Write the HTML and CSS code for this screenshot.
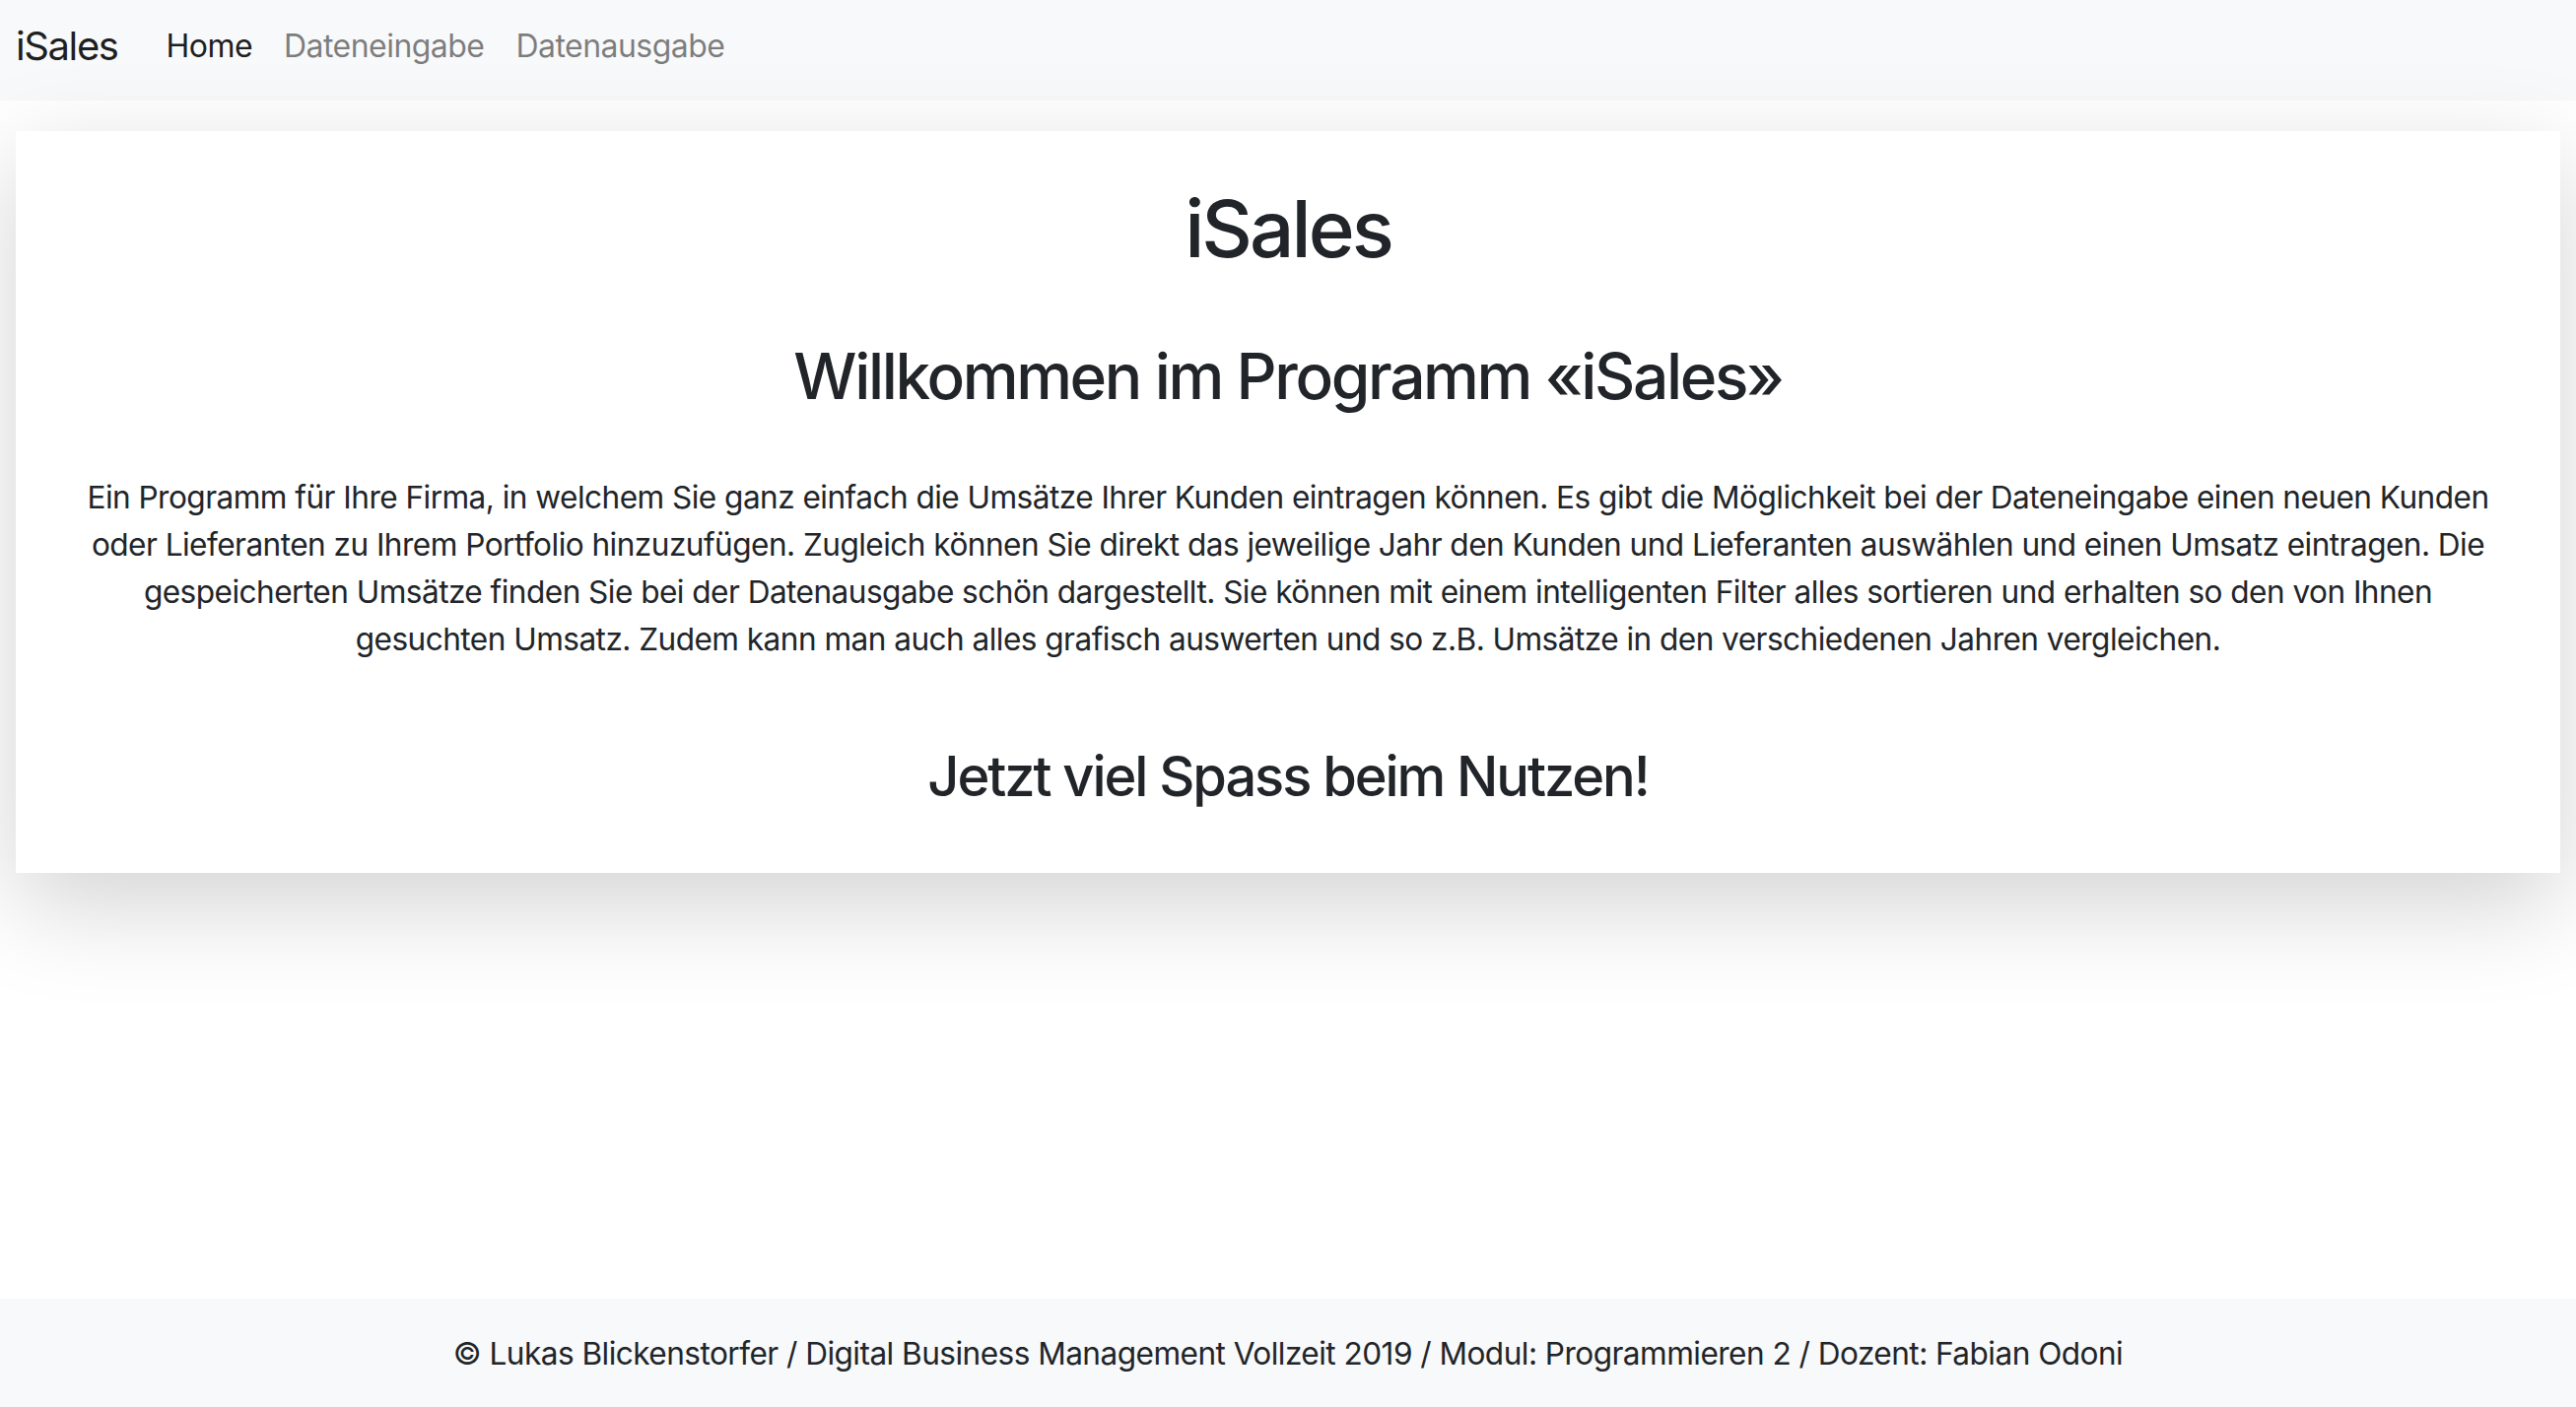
FILE: index.html
```html
<!DOCTYPE html>
<html lang="de">
<head>
<meta charset="utf-8">
<title>iSales</title>
<link rel="stylesheet" href="styles.css">
</head>
<body>
<nav class="navbar">
  <a class="brand" href="#">iSales</a>
  <ul class="nav">
    <li><a class="nav-link active" href="#">Home</a></li>
    <li><a class="nav-link" href="#">Dateneingabe</a></li>
    <li><a class="nav-link" href="#">Datenausgabe</a></li>
  </ul>
</nav>
<main class="main">
  <section class="card">
    <h1 class="title">iSales</h1>
    <h2 class="welcome">Willkommen im Programm «iSales»</h2>
    <p class="intro">Ein Programm für Ihre Firma, in welchem Sie ganz einfach die Umsätze Ihrer Kunden eintragen können. Es gibt die Möglichkeit bei der Dateneingabe einen neuen Kunden<br>oder Lieferanten zu Ihrem Portfolio hinzuzufügen. Zugleich können Sie direkt das jeweilige Jahr den Kunden und Lieferanten auswählen und einen Umsatz eintragen. Die<br>gespeicherten Umsätze finden Sie bei der Datenausgabe schön dargestellt. Sie können mit einem intelligenten Filter alles sortieren und erhalten so den von Ihnen<br>gesuchten Umsatz. Zudem kann man auch alles grafisch auswerten und so z.B. Umsätze in den verschiedenen Jahren vergleichen.</p>
    <h3 class="closing">Jetzt viel Spass beim Nutzen!</h3>
  </section>
</main>
<footer class="footer">© Lukas Blickenstorfer / Digital Business Management Vollzeit 2019 / Modul: Programmieren 2 / Dozent: Fabian Odoni</footer>
</body>
</html>
```
FILE: styles.css
```css
* { box-sizing: border-box; }
html, body { margin: 0; padding: 0; }
body {
  font-family: Inter, "Noto Sans", "Liberation Sans", sans-serif;
  color: #212529;
  background: #fff;
  min-height: 100vh;
  display: flex;
  flex-direction: column;
  letter-spacing: -0.034em;
}
.navbar {
  height: 102px;
  background: #f8f9fa;
  display: flex;
  align-items: center;
  padding: 0 16px 8px;
}
.brand {
  font-size: 40px;
  color: rgba(0,0,0,.9);
  text-decoration: none;
  margin-right: 33px;
  line-height: 1;
  letter-spacing: -0.035em;
}
.nav {
  list-style: none;
  margin: 0;
  padding: 0;
  display: flex;
}
.nav-link {
  display: block;
  font-size: 32px;
  padding: 0 16px;
  color: rgba(0,0,0,.5);
  text-decoration: none;
  line-height: 1;
}
.nav-link.active { color: rgba(0,0,0,.9); }
.main {
  padding: 31px 16px 0;
}
.card {
  background: #fff;
  box-shadow: 0 32px 96px rgba(0,0,0,.175);
  padding: 51px 40px 64px;
  text-align: center;
}
.title, .welcome, .closing {
  font-weight: 500;
  line-height: 1.2;
  letter-spacing: -0.037em;
}
.title {
  font-size: 80px;
  margin: 0 0 64px;
}
.welcome {
  font-size: 64px;
  margin: 0 0 60px;
}
.intro {
  font-size: 31.6px;
  line-height: 48px;
  margin: 0 0 82px;
}
.closing {
  font-size: 56px;
  margin: 0;
}
.footer {
  margin-top: auto;
  height: 110px;
  background: #f8f9fa;
  display: flex;
  align-items: center;
  justify-content: center;
  font-size: 31.6px;
}
```
